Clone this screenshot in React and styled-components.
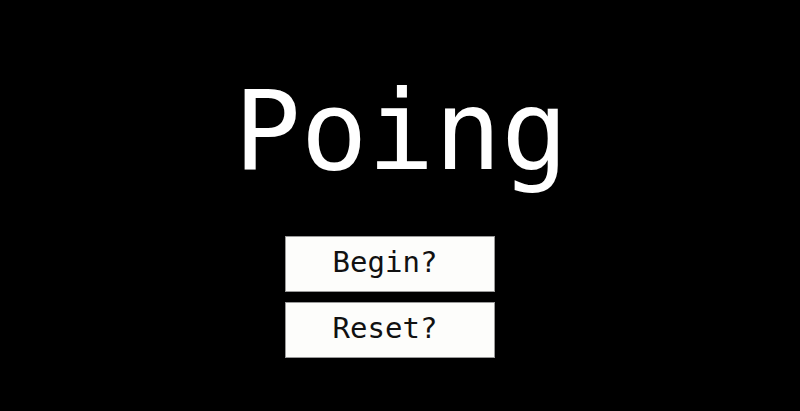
import React from 'react';
import styled, { createGlobalStyle } from 'styled-components';

const GlobalStyle = createGlobalStyle`
  html, body {
    margin: 0;
    padding: 0;
    background: #000;
  }
`

const Screen = styled.div`
  width: 800px;
  height: 411px;
  background: #000;
  display: flex;
  flex-direction: column;
  align-items: center;
  font-family: "DejaVu Sans Mono", "Liberation Mono", monospace;
`

const Title = styled.h1`
  margin: 66px 0 0 2px;
  font-size: 111px;
  font-weight: normal;
  line-height: 130px;
  color: #fff;
`

const Menu = styled.div`
  margin: 40px 20px 0 0;
  display: flex;
  flex-direction: column;
  gap: 10px;
`

const MenuButton = styled.button`
  width: 210px;
  height: 56px;
  box-sizing: border-box;
  background: #fdfdfb;
  border: 1px solid #9a9a9a;
  color: #111;
  font-family: inherit;
  font-size: 29px;
  line-height: 1;
  padding: 0 10px 4px 0;
  cursor: pointer;
`

export default function App() {
  return (
    <Screen>
      <GlobalStyle />
      <Title>Poing</Title>
      <Menu>
        <MenuButton>Begin?</MenuButton>
        <MenuButton>Reset?</MenuButton>
      </Menu>
    </Screen>
  )
}
